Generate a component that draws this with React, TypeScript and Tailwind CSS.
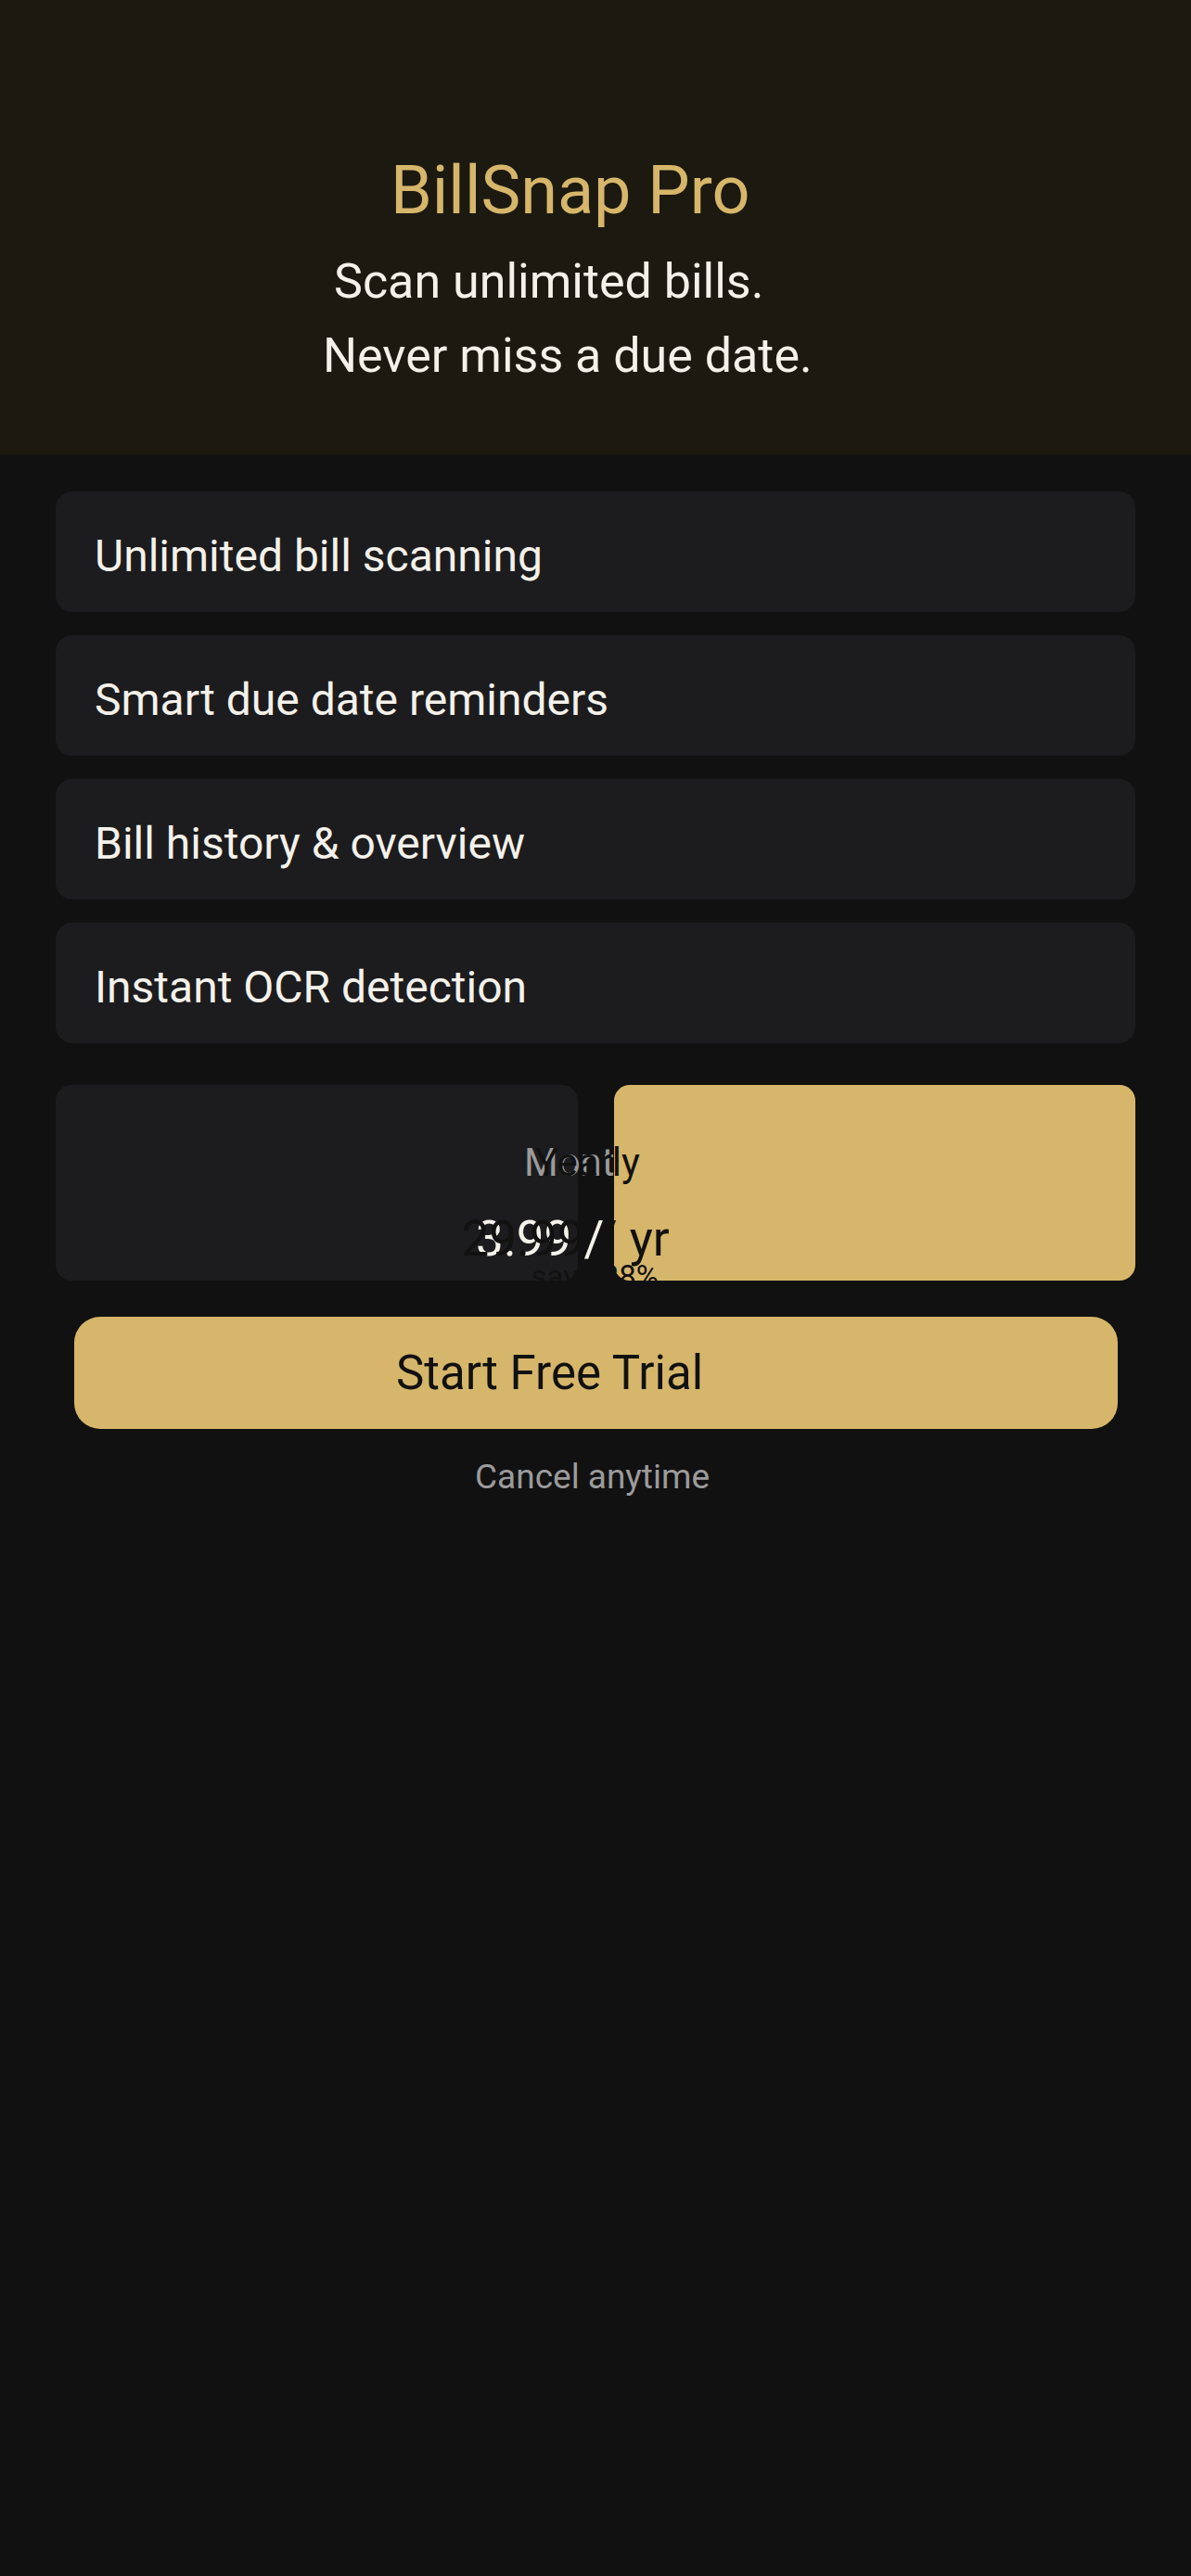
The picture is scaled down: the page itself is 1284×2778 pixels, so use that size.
const features = [
  "Unlimited bill scanning",
  "Smart due date reminders",
  "Bill history & overview",
  "Instant OCR detection",
];

export default function App() {
  return (
    <div
      className="min-h-screen bg-[#111111] text-[#f4f1ea]"
      style={{ fontFamily: "Roboto, 'Liberation Sans', sans-serif" }}
    >
      {/* Hero */}
      <div className="h-[490px] bg-[#1c1910] pt-[164px]">
        <h1 className="pl-[421px] text-[72px] leading-[84px] text-[#d6b66a] whitespace-nowrap">
          BillSnap Pro
        </h1>
        <div className="mt-[16px] text-[52px] leading-[80px] whitespace-nowrap">
          <p className="pl-[360px]">Scan unlimited bills.</p>
          <p className="pl-[348px]">Never miss a due date.</p>
        </div>
      </div>

      {/* Features */}
      <div className="mt-[40px] flex flex-col gap-[25px] px-[60px]">
        {features.map((f) => (
          <div
            key={f}
            className="h-[130px] rounded-[18px] bg-[#1c1c1e] pl-[42px] pt-[42px] text-[48px] leading-[56px] whitespace-nowrap"
          >
            {f}
          </div>
        ))}
      </div>

      {/* Plans — labels overflow their cards and overlap, as in the reference */}
      <div className="mt-[45px] flex gap-[39px] px-[60px]">
        <div className="relative h-[211px] flex-1 rounded-[17px] bg-[#1c1c1e]">
          <span className="absolute left-[505px] top-[63px] text-[42px] leading-none text-[#9b9b9b] whitespace-nowrap">
            Monthly
          </span>
          <span className="absolute left-[453px] top-[140px] text-[53px] leading-none text-[#f5f2ea] whitespace-nowrap">
            3.99 / mo
          </span>
        </div>
        <div className="relative h-[211px] flex-1 rounded-[17px] bg-[#d6b66a]">
          <span className="absolute left-[-85px] top-[63px] text-[42px] leading-none text-[#111111] whitespace-nowrap">
            Yearly
          </span>
          <span className="absolute left-[-164px] top-[140px] text-[53px] leading-none text-[#111111] whitespace-nowrap">
            29.99 / yr
          </span>
          <span className="absolute left-[-89px] top-[190px] text-[33px] leading-none text-[#111111] whitespace-nowrap">
            save 38%
          </span>
        </div>
      </div>

      {/* CTA */}
      <div className="mt-[39px] pl-[80px] pr-[79px]">
        <button className="flex h-[121px] w-full items-center rounded-[28px] bg-[#d6b66a] pl-[347px] text-[51px] leading-none text-[#111111] whitespace-nowrap">
          Start Free Trial
        </button>
      </div>
      <p className="mt-[33px] pl-[512px] text-[37px] leading-none text-[#9b9b9b] whitespace-nowrap">
        Cancel anytime
      </p>
    </div>
  );
}
